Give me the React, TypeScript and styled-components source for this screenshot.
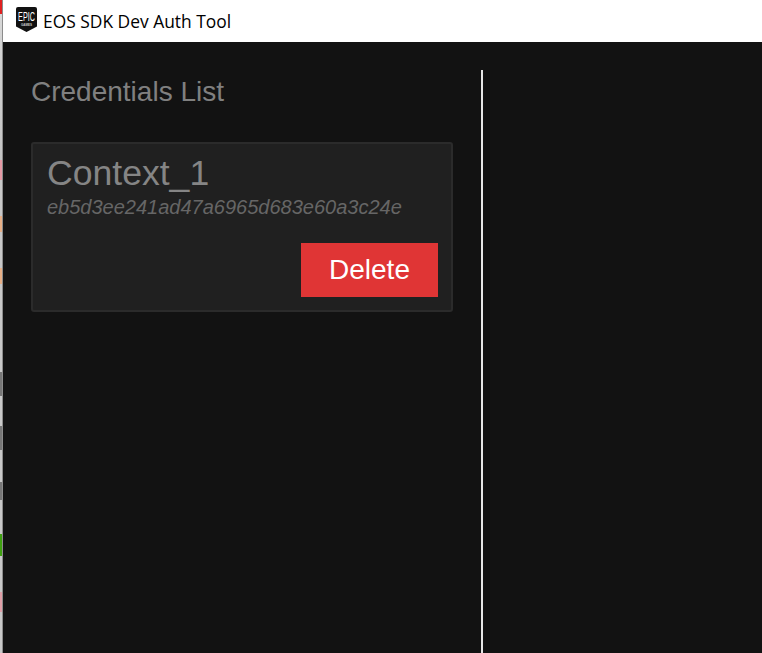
import { FC } from 'react';
import styled, { createGlobalStyle } from 'styled-components';

const GlobalStyle = createGlobalStyle`
  html, body {
    margin: 0;
    padding: 0;
    height: 100%;
    overflow: hidden;
    background: #121212;
  }
  #root {
    height: 100%;
  }
`;

const Desktop = styled.div`
  display: flex;
  width: 762px;
  height: 653px;
`;

// what is left of the desktop behind the window
const DesktopEdge = styled.div`
  flex: 0 0 2px;
  border-right: 1px solid #8c8c8c;
  background: linear-gradient(
    to bottom,
    #e02020 0,
    #e02020 14px,
    #d8d8d8 14px,
    #c4c4c4 160px,
    #e59aa5 160px,
    #e59aa5 180px,
    #c8c8c8 180px,
    #c8c8c8 216px,
    #e8b088 216px,
    #e8b088 232px,
    #c8c8c8 232px,
    #c8c8c8 268px,
    #e8b088 268px,
    #e8b088 284px,
    #c8c8c8 284px,
    #c8c8c8 372px,
    #777 372px,
    #777 396px,
    #c8c8c8 396px,
    #c8c8c8 426px,
    #777 426px,
    #777 450px,
    #c8c8c8 450px,
    #c8c8c8 482px,
    #777 482px,
    #777 500px,
    #c8c8c8 500px,
    #c8c8c8 534px,
    #3fa010 534px,
    #3fa010 556px,
    #c8c8c8 556px,
    #c8c8c8 592px,
    #e0a0a8 592px,
    #e0a0a8 612px,
    #c8c8c8 612px
  );
`;

const AppWindow = styled.div`
  flex: 1;
  display: flex;
  flex-direction: column;
  min-width: 0;
`;

const TitleBar = styled.header`
  flex: 0 0 42px;
  display: flex;
  align-items: center;
  gap: 6px;
  padding-left: 13px;
  background: #ffffff;
`;

const LogoSlot = styled.span`
  display: flex;
  margin-top: -3px;
`;

const WindowTitle = styled.span`
  font-family: 'Open Sans', 'Liberation Sans', sans-serif;
  font-size: 17.4px;
  line-height: 24px;
  color: #000000;
  white-space: nowrap;
`;

const Content = styled.main`
  flex: 1;
  display: grid;
  grid-template-columns: 480px 1fr;
  background: #121212;
  font-family: 'Liberation Sans', Arial, sans-serif;
`;

const ListPanel = styled.section`
  margin-top: 28px;
  padding: 4px 0 0 28px;
  border-right: 2px solid #e6e6e6;
`;

const PanelTitle = styled.h2`
  margin: 0 0 32px;
  font-size: 28px;
  line-height: 36px;
  font-weight: 400;
  color: #808080;
`;

const CredentialCard = styled.article`
  box-sizing: border-box;
  width: 422px;
  height: 170px;
  padding: 11px 13px 13px 14px;
  display: flex;
  flex-direction: column;
  background: #202020;
  border: 2px solid #2b2b2b;
  border-radius: 3px;
`;

const CredentialName = styled.div`
  font-size: 35.6px;
  line-height: 36px;
  color: #858585;
`;

const CredentialId = styled.div`
  margin-top: 5px;
  font-size: 20px;
  line-height: 22px;
  font-style: italic;
  color: #666666;
`;

const CardActions = styled.div`
  margin-top: auto;
  display: flex;
  justify-content: flex-end;
`;

const DeleteButton = styled.button`
  width: 137px;
  height: 54px;
  padding: 0;
  border: 0;
  background: #e03535;
  color: #ffffff;
  font-family: inherit;
  font-size: 28px;
`;

const EpicLogo: FC = () => (
  <svg width="21" height="25" viewBox="0 0 21 25">
    <path d="M2 0H19A2 2 0 0 1 21 2V19.5L10.5 25L0 19.5V2A2 2 0 0 1 2 0Z" fill="#111111" />
    <text transform="translate(10.5 13.5) scale(0.6 1)" fill="#ffffff" fontFamily="'Liberation Sans', sans-serif" fontSize="12" textAnchor="middle">
      EPIC
    </text>
    <text transform="translate(10.5 19) scale(0.85 1)" fill="#c8c8c8" fontFamily="'Liberation Sans', sans-serif" fontSize="3.6" fontWeight="700" textAnchor="middle">
      GAMES
    </text>
  </svg>
);

const App: FC = () => (
  <>
    <GlobalStyle />
    <Desktop>
      <DesktopEdge />
      <AppWindow>
        <TitleBar>
          <LogoSlot>
            <EpicLogo />
          </LogoSlot>
          <WindowTitle>EOS SDK Dev Auth Tool</WindowTitle>
        </TitleBar>
        <Content>
          <ListPanel>
            <PanelTitle>Credentials List</PanelTitle>
            <CredentialCard>
              <CredentialName>Context_1</CredentialName>
              <CredentialId>eb5d3ee241ad47a6965d683e60a3c24e</CredentialId>
              <CardActions>
                <DeleteButton>Delete</DeleteButton>
              </CardActions>
            </CredentialCard>
          </ListPanel>
        </Content>
      </AppWindow>
    </Desktop>
  </>
);

export default App;
